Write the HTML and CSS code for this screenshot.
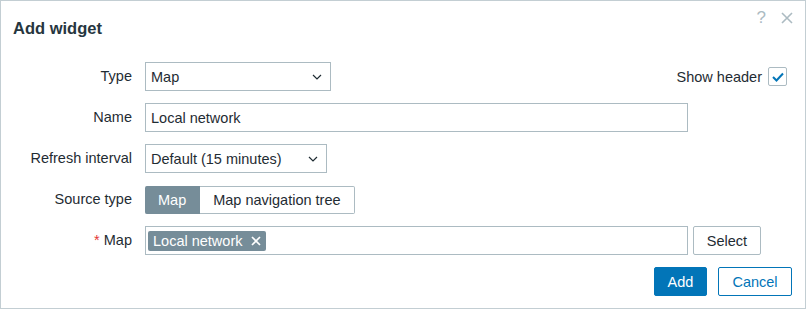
FILE: index.html
```html
<!DOCTYPE html>
<html lang="en">
<head>
    <meta charset="UTF-8">
    <title>Add widget</title>
    <link rel="stylesheet" href="styles.css">
</head>
<body>
    <div class="dialog">
        <div class="dialog-head">
            <h2>Add widget</h2>
            <div class="head-icons">
                <span class="icon-help">?</span>
                <svg class="icon-close" width="12" height="12" viewBox="0 0 12 12"><path d="M1 1L11 11M11 1L1 11" stroke="#acbbc2" stroke-width="1.6" fill="none"/></svg>
            </div>
        </div>
        <div class="form">
            <label class="lbl">Type</label>
            <div class="field">
                <div class="select w-type">Map <svg class="caret" width="10" height="6" viewBox="0 0 10 6"><path d="M1 1L5 5L9 1" stroke="#1f2c33" stroke-width="1.2" fill="none"/></svg></div>
                <div class="show-header">
                    <span>Show header</span>
                    <span class="checkbox"><svg width="12" height="10" viewBox="0 0 12 10"><path d="M1 5L4.5 8.5L11 1.5" stroke="#0275b8" stroke-width="2" fill="none"/></svg></span>
                </div>
            </div>

            <label class="lbl">Name</label>
            <div class="field">
                <div class="input w-wide">Local network</div>
            </div>

            <label class="lbl">Refresh interval</label>
            <div class="field">
                <div class="select w-refresh">Default (15 minutes) <svg class="caret" width="10" height="6" viewBox="0 0 10 6"><path d="M1 1L5 5L9 1" stroke="#1f2c33" stroke-width="1.2" fill="none"/></svg></div>
            </div>

            <label class="lbl">Source type</label>
            <div class="field">
                <div class="segmented">
                    <span class="seg active">Map</span>
                    <span class="seg">Map navigation tree</span>
                </div>
            </div>

            <label class="lbl"><span class="req">*</span> Map</label>
            <div class="field">
                <div class="input multiselect w-wide">
                    <span class="tag">Local network <svg width="10" height="10" viewBox="0 0 10 10"><path d="M1 1L9 9M9 1L1 9" stroke="#fff" stroke-width="1.7" fill="none"/></svg></span>
                </div>
                <button class="btn-grey">Select</button>
            </div>
        </div>
        <div class="dialog-foot">
            <button class="btn-primary">Add</button>
            <button class="btn-alt">Cancel</button>
        </div>
    </div>
</body>
</html>
```

FILE: styles.css
```css
body {
    margin: 0;
    font-family: 'Liberation Sans', Arial, sans-serif;
    font-size: 14.5px;
    color: #1f2c33;
    background: #fff;
}
.dialog {
    width: 806px;
    height: 309px;
    box-sizing: border-box;
    border: 1px solid #c3ced3;
    background: #fff;
}
.dialog-head {
    display: flex;
    justify-content: space-between;
    height: 61px;
    padding: 0 12px 0 12px;
}
.dialog-head h2 {
    margin: 18px 0 0 0;
    font-size: 16.5px;
    font-weight: bold;
    color: #263640;
}
.head-icons {
    display: flex;
    align-items: center;
    gap: 15px;
    height: 30px;
    margin-top: 2px;
}
.icon-help {
    color: #acbbc2;
    font-size: 17px;
}
.form {
    display: grid;
    grid-template-columns: 131px 1fr;
    column-gap: 13px;
    row-gap: 12px;
    padding-right: 18px;
}
.lbl {
    text-align: right;
    line-height: 29px;
}
.req {
    color: #e33734;
}
.field {
    display: flex;
    align-items: center;
    gap: 5px;
}
.select, .input {
    box-sizing: border-box;
    height: 29px;
    border: 1px solid #acbbc2;
    background: #fff;
    padding: 0 5px;
    display: flex;
    align-items: center;
}
.select {
    justify-content: space-between;
    padding-right: 8px;
}
.w-type { width: 186px; }
.w-refresh { width: 182px; }
.w-wide { width: 543px; }
.show-header {
    margin-left: auto;
    display: flex;
    align-items: center;
    gap: 6px;
}
.checkbox {
    box-sizing: border-box;
    width: 19px;
    height: 19px;
    border: 1px solid #acbbc2;
    border-radius: 2px;
    display: flex;
    align-items: center;
    justify-content: center;
}
.segmented {
    display: flex;
    height: 28px;
}
.seg {
    box-sizing: border-box;
    display: flex;
    align-items: center;
    padding: 0 13px;
    border: 1px solid #acbbc2;
    border-left: none;
    border-radius: 0 2px 2px 0;
}
.seg.active {
    background: #768d99;
    border-color: #768d99;
    color: #fff;
    border-radius: 2px 0 0 2px;
    padding: 0 13px;
}
.multiselect {
    padding: 0 2px;
}
.tag {
    display: flex;
    align-items: center;
    gap: 9px;
    height: 20px;
    padding: 0 5px;
    background: #768d99;
    color: #fff;
    border-radius: 2px;
}
button {
    font-family: 'Liberation Sans', Arial, sans-serif;
    font-size: 14.5px;
    height: 29px;
    box-sizing: border-box;
    border-radius: 2px;
    cursor: pointer;
}
.btn-grey {
    background: #fff;
    border: 1px solid #acbbc2;
    color: #1f2c33;
    width: 68px;
}
.dialog-foot {
    display: flex;
    justify-content: flex-end;
    gap: 11px;
    padding: 12px 13px 0 0;
}
.btn-primary {
    background: #0275b8;
    border: 1px solid #0275b8;
    color: #fff;
    width: 53px;
}
.btn-alt {
    background: #fff;
    border: 1px solid #0275b8;
    color: #0275b8;
    width: 74px;
}
```
